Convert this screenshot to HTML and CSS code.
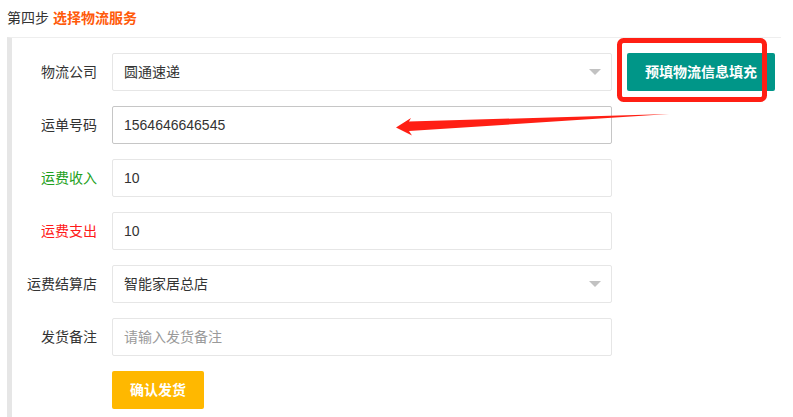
FILE: index.html
```html
<!DOCTYPE html>
<html lang="zh-CN">
<head>
<meta charset="utf-8">
<title>选择物流服务</title>
<link rel="stylesheet" href="styles.css">
</head>
<body>
<div class="page">
  <div class="step-title">第四步 <b class="step-name">选择物流服务</b></div>
  <div class="quote">
    <div class="row">
      <label class="label">物流公司</label>
      <div class="field select"><span class="val">圆通速递</span><i class="edge"></i></div>
      <button class="btn btn-teal">预填物流信息填充</button>
    </div>
    <div class="row">
      <label class="label">运单号码</label>
      <div class="field focus"><span class="val">1564646646545</span></div>
    </div>
    <div class="row">
      <label class="label green">运费收入</label>
      <div class="field"><span class="val">10</span></div>
    </div>
    <div class="row">
      <label class="label red">运费支出</label>
      <div class="field"><span class="val">10</span></div>
    </div>
    <div class="row">
      <label class="label">运费结算店</label>
      <div class="field select"><span class="val">智能家居总店</span><i class="edge"></i></div>
    </div>
    <div class="row">
      <label class="label">发货备注</label>
      <div class="field"><span class="val ph">请输入发货备注</span></div>
    </div>
    <div class="row">
      <span class="label"></span>
      <button class="btn btn-warm">确认发货</button>
    </div>
  </div>
  <svg class="annot" width="793" height="417" viewBox="0 0 793 417">
    <rect x="619.5" y="40.5" width="145" height="59" rx="4" ry="4" fill="none" stroke="#ff1f14" stroke-width="5"/>
    <polygon points="396,127.5 411,118 409,121.5 669,114 409,131 412,135.5" fill="#ff1f14"/>
  </svg>
</div>
</body>
</html>
```
FILE: styles.css
```css
* { box-sizing: border-box; }
html, body { margin: 0; padding: 0; background: #fff; }
body {
  font-family: "Liberation Sans", "Noto Sans CJK SC", sans-serif;
  font-size: 14px;
  color: #333;
}
.page { position: relative; width: 793px; height: 417px; overflow: hidden; }
.step-title {
  padding: 8px 0 9px 7px;
  line-height: 20px;
  height: 37px;
  color: #333;
}
.step-name { color: #ff5a0a; font-weight: bold; }
.quote {
  margin-left: 7px;
  width: 774px;
  border: 1px solid #eee;
  border-right: 0;
  border-bottom: 0;
  border-left: 5px solid #e6e6e6;
  padding-top: 15px;
  height: 380px;
}
.row {
  display: flex;
  align-items: center;
  gap: 15px;
  margin-bottom: 15px;
  height: 38px;
}
.label {
  width: 85px;
  text-align: right;
  line-height: 20px;
  color: #333;
}
.label.green { color: #1e9f22; }
.label.red { color: #ff1a1a; }
.field {
  position: relative;
  width: 500px;
  height: 38px;
  border: 1px solid #e6e6e6;
  border-radius: 2px;
  display: flex;
  align-items: center;
  padding-left: 11px;
  background: #fff;
}
.field.focus { border-color: #c6c6c6; }
.val { line-height: 20px; color: #333; }
.val.ph { color: #9a9a9a; }
.edge {
  position: absolute;
  right: 10px;
  top: 50%;
  margin-top: -3px;
  width: 0;
  height: 0;
  border-left: 6px solid transparent;
  border-right: 6px solid transparent;
  border-top: 6px solid #c2c2c2;
}
.btn {
  height: 38px;
  padding: 0 18px;
  border: 0;
  border-radius: 2px;
  color: #fff;
  font-family: "Liberation Sans", "Noto Sans CJK SC", sans-serif;
  font-size: 14px;
  font-weight: bold;
  line-height: 38px;
  white-space: nowrap;
}
.btn-teal { background: #009688; }
.btn-warm { background: #ffb800; }
.annot { position: absolute; left: 0; top: 0; pointer-events: none; }
```
